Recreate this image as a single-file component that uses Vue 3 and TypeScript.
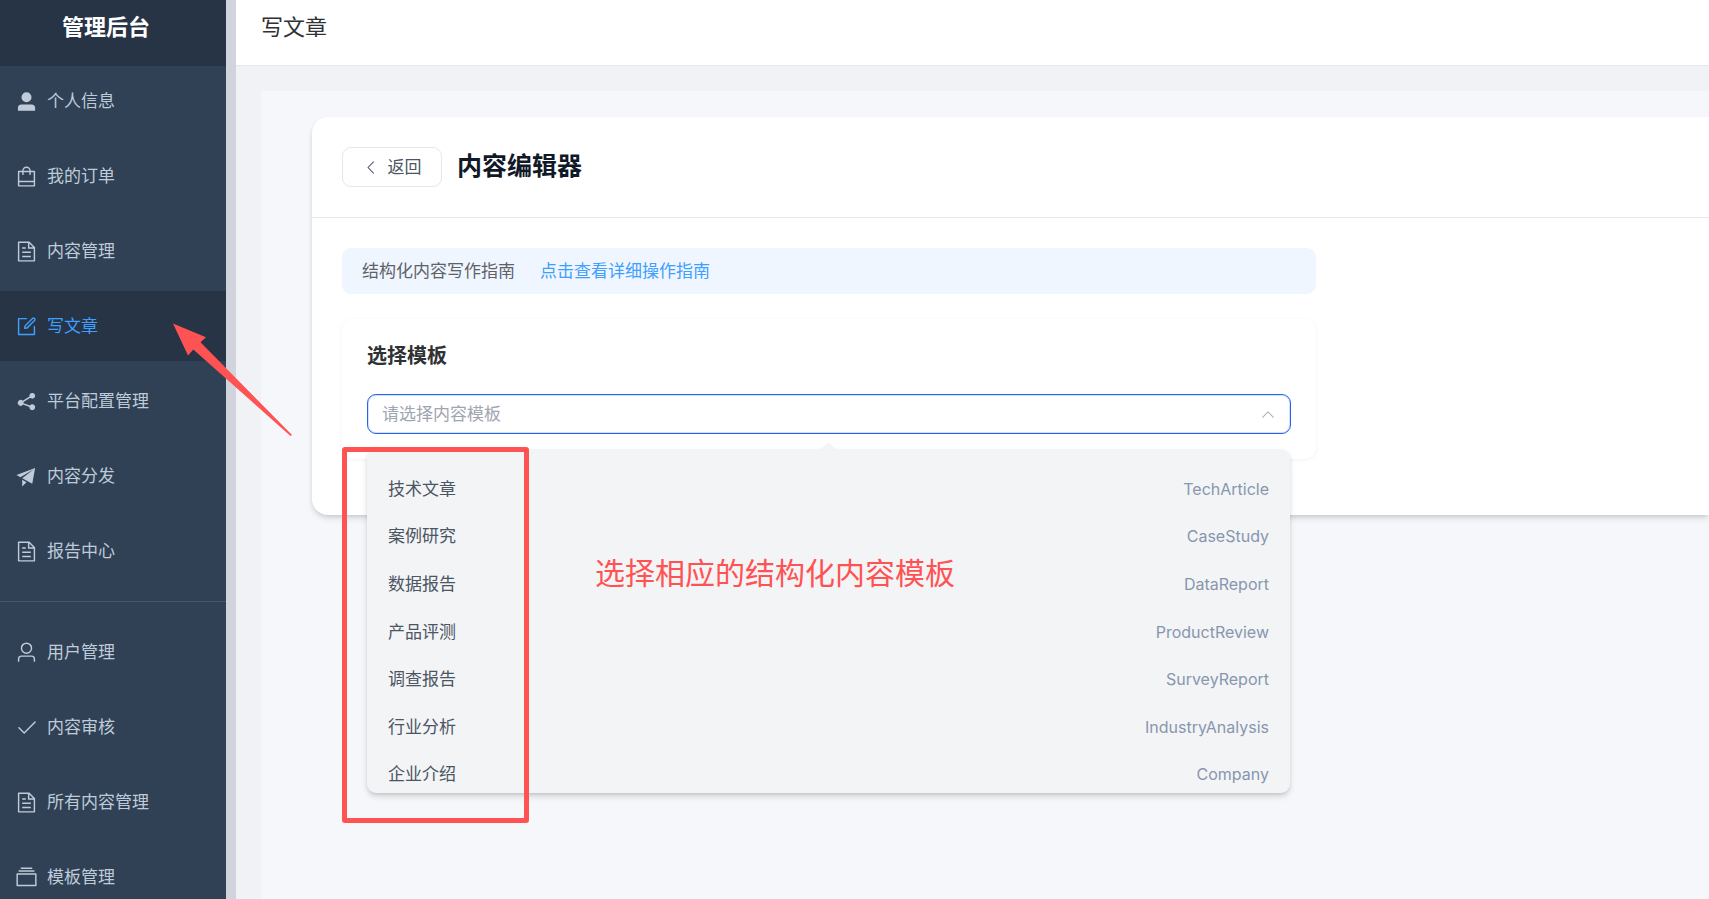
<script setup lang="ts">
import { computed, ref } from 'vue'

interface MenuItem {
  label: string
  icon: string
}

interface Template {
  name: string
  type: string
}

const icons: Record<string, string> = {
  userFilled:
    'M288 320a224 224 0 1 0 448 0 224 224 0 1 0-448 0m544 608H160a32 32 0 0 1-32-32v-96a160 160 0 0 1 160-160h448a160 160 0 0 1 160 160v96a32 32 0 0 1-32 32z',
  bag: 'M704 320v96a32 32 0 0 1-32 32h-32V320H384v128h-32a32 32 0 0 1-32-32v-96H192v576h640V320zm-384-64a192 192 0 1 1 384 0h160a32 32 0 0 1 32 32v640a32 32 0 0 1-32 32H160a32 32 0 0 1-32-32V288a32 32 0 0 1 32-32zm64 0h256a128 128 0 1 0-256 0M192 704h640v64H192z',
  document:
    'M832 384H576V128H192v768h640zm-26.496-64L640 154.496V320zM160 64h480l256 256v608a32 32 0 0 1-32 32H160a32 32 0 0 1-32-32V96a32 32 0 0 1 32-32m160 448h384v64H320zm0-192h160v64H320zm0 384h384v64H320z',
  edit: 'M832 512a32 32 0 1 1 64 0v352a32 32 0 0 1-32 32H160a32 32 0 0 1-32-32V160a32 32 0 0 1 32-32h352a32 32 0 0 1 0 64H192v640h640zM469.952 554.24l52.8-7.552L847.104 222.4a32 32 0 1 0-45.248-45.248L477.44 501.44l-7.552 52.8zm422.4-422.4a96 96 0 0 1 0 135.808l-331.84 331.84a32 32 0 0 1-18.112 9.088L436.8 623.68a32 32 0 0 1-36.224-36.224l15.104-105.6a32 32 0 0 1 9.024-18.112l331.904-331.84a96 96 0 0 1 135.744 0z',
  share:
    'm679.872 348.8-301.76 188.608a127.808 127.808 0 0 1 5.12 52.16l279.936 104.96a128 128 0 1 1-22.464 59.904l-279.872-104.96a128 128 0 1 1-16.64-166.272l301.696-188.608a128 128 0 1 1 33.92 54.272z',
  promotion:
    'm64 448 832-320-128 704-446.08-243.328L832 192 242.816 545.536zm256 512V657.024L512 768z',
  user: 'M512 512a192 192 0 1 0 0-384 192 192 0 0 0 0 384m0 64a256 256 0 1 1 0-512 256 256 0 0 1 0 512m320 320v-96a96 96 0 0 0-96-96H288a96 96 0 0 0-96 96v96a32 32 0 1 1-64 0v-96a160 160 0 0 1 160-160h448a160 160 0 0 1 160 160v96a32 32 0 1 1-64 0',
  check:
    'M406.656 706.944 195.84 496.256a32 32 0 1 0-45.248 45.248l256 256 512-512a32 32 0 0 0-45.248-45.248L406.592 706.944z',
  files:
    'M128 384v448h768V384zm-32-64h832a32 32 0 0 1 32 32v512a32 32 0 0 1-32 32H96a32 32 0 0 1-32-32V352a32 32 0 0 1 32-32m64-128h704v64H160zm96-128h512v64H256z',
  arrowLeft:
    'M609.408 149.376 277.76 489.6a32 32 0 0 0 0 44.672l331.648 340.352a29.12 29.12 0 0 0 41.728 0 30.592 30.592 0 0 0 0-42.752L339.264 511.936l311.872-319.872a30.592 30.592 0 0 0 0-42.688 29.12 29.12 0 0 0-41.728 0z',
  arrowUp:
    'm488.832 344.32-339.84 356.672a32 32 0 0 0 0 44.16l.384.384a29.44 29.44 0 0 0 42.688 0l320-335.872 319.872 335.872a29.44 29.44 0 0 0 42.688 0l.384-.384a32 32 0 0 0 0-44.16L535.168 344.32a32 32 0 0 0-46.336 0',
}

const menuGroups: MenuItem[][] = [
  [
    { label: '个人信息', icon: 'userFilled' },
    { label: '我的订单', icon: 'bag' },
    { label: '内容管理', icon: 'document' },
    { label: '写文章', icon: 'edit' },
    { label: '平台配置管理', icon: 'share' },
    { label: '内容分发', icon: 'promotion' },
    { label: '报告中心', icon: 'document' },
  ],
  [
    { label: '用户管理', icon: 'user' },
    { label: '内容审核', icon: 'check' },
    { label: '所有内容管理', icon: 'document' },
    { label: '模板管理', icon: 'files' },
  ],
]

const templates: Template[] = [
  { name: '技术文章', type: 'TechArticle' },
  { name: '案例研究', type: 'CaseStudy' },
  { name: '数据报告', type: 'DataReport' },
  { name: '产品评测', type: 'ProductReview' },
  { name: '调查报告', type: 'SurveyReport' },
  { name: '行业分析', type: 'IndustryAnalysis' },
  { name: '企业介绍', type: 'Company' },
]

const active = ref('写文章')
const open = ref(true)
const selected = ref('')
const shown = computed(() => selected.value || '请选择内容模板')

function choose(t: Template) {
  selected.value = t.name
  open.value = false
}
</script>

<template>
  <div class="layout">
    <aside class="sidebar">
      <div class="brand">管理后台</div>
      <nav>
        <ul v-for="(group, g) in menuGroups" :key="g" class="menu">
          <li v-for="item in group" :key="item.label">
            <a
              href="#"
              class="menu-item"
              :class="{ active: item.label === active }"
              @click.prevent="active = item.label"
            >
              <svg class="icon" viewBox="0 0 1024 1024" aria-hidden="true"><path :d="icons[item.icon]" /></svg>
              <span>{{ item.label }}</span>
            </a>
          </li>
        </ul>
      </nav>
    </aside>
    <div class="gutter"></div>
    <div class="page">
      <header class="topbar">写文章</header>
      <main class="main">
        <div class="view">
          <section class="card">
            <div class="card-header">
              <button type="button" class="back">
                <svg class="back-icon" viewBox="0 0 1024 1024" aria-hidden="true"><path :d="icons.arrowLeft" /></svg>
                <span>返回</span>
              </button>
              <h1>内容编辑器</h1>
            </div>
            <div class="card-body">
              <div class="guide">
                <span>结构化内容写作指南</span>
                <a href="#" @click.prevent>点击查看详细操作指南</a>
              </div>
              <div class="picker">
                <label for="template">选择模板</label>
                <div class="select-box">
                  <select id="template" :class="{ chosen: selected }" @mousedown.prevent="open = !open">
                    <option>{{ shown }}</option>
                  </select>
                  <svg class="caret" :class="{ closed: !open }" viewBox="0 0 1024 1024" aria-hidden="true">
                    <path :d="icons.arrowUp" />
                  </svg>
                  <div v-if="open" class="dropdown">
                    <ul>
                      <li v-for="t in templates" :key="t.type">
                        <button type="button" class="option" @click="choose(t)">
                          <span>{{ t.name }}</span>
                          <span class="type">{{ t.type }}</span>
                        </button>
                      </li>
                    </ul>
                  </div>
                </div>
              </div>
            </div>
          </section>
        </div>
      </main>
    </div>

    <svg class="arrow" viewBox="0 0 120 114" aria-hidden="true">
      <path d="M1 1.5 34 15.3 28.5 20.3 120 113 118.5 114 21.3 27.5 16 33.5z" />
    </svg>
    <div class="marker"></div>
    <p class="note">选择相应的结构化内容模板</p>
  </div>
</template>

<style>
html,
body,
#app {
  height: 100%;
}
body {
  margin: 0;
  overflow: hidden;
}
</style>

<style scoped>
.layout {
  position: relative;
  display: flex;
  height: 100%;
  overflow: hidden;
  font-family: Inter, 'Noto Sans CJK SC', sans-serif;
  font-size: 17px;
  line-height: 24px;
  color: #303133;
}
.layout * {
  box-sizing: border-box;
}
ul {
  margin: 0;
  padding: 0;
  list-style: none;
}
button,
select {
  font: inherit;
  cursor: pointer;
}
svg {
  fill: currentColor;
  flex: none;
}
.sidebar {
  flex: none;
  width: 226px;
  background: #304156;
  overflow: hidden;
}
.brand {
  height: 66px;
  padding-top: 11px;
  padding-right: 14px;
  background: #263445;
  color: #fff;
  font-size: 22px;
  line-height: 32px;
  font-weight: 700;
  text-align: center;
}
.menu-item {
  display: flex;
  align-items: center;
  gap: 9px;
  height: 70px;
  margin-bottom: 5px;
  padding: 0 15px;
  color: #bfcbd9;
  text-decoration: none;
}
.menu-item.active {
  background: #263445;
  color: #409eff;
}
.icon {
  width: 23px;
  height: 23px;
}
.menu + .menu {
  margin-top: 15px;
  padding-top: 15px;
  border-top: 1px solid #475669;
}
.gutter {
  flex: none;
  width: 10px;
  background: #d1d4dc;
}
.page {
  flex: 1;
  min-width: 0;
  display: flex;
  flex-direction: column;
}
.topbar {
  height: 66px;
  padding: 11px 25px;
  background: #fff;
  border-bottom: 1px solid #e4e7ed;
  font-size: 22px;
  line-height: 32px;
}
.main {
  flex: 1;
  padding: 25px 0 0 25px;
  background: #f0f2f5;
}
.view {
  height: 100%;
  padding: 26px 0 0 51px;
  background: #f5f7fb;
}
.card {
  background: #fff;
  border-radius: 16px 0 0 16px;
  box-shadow: 0 4px 7px -1px rgba(0, 0, 0, 0.12), 0 2px 4px -1px rgba(0, 0, 0, 0.1);
}
.card-header {
  display: flex;
  align-items: center;
  gap: 15px;
  padding: 30px;
  border-bottom: 1px solid #e5e7eb;
}
.back {
  display: flex;
  align-items: center;
  justify-content: center;
  gap: 8px;
  width: 100px;
  height: 40px;
  padding: 0;
  background: #fff;
  border: 1px solid #e5e7eb;
  border-radius: 9px;
  color: #4b5563;
}
.back-icon {
  width: 17px;
  height: 17px;
}
h1 {
  margin: 0 0 2px;
  color: #111827;
  font-size: 25px;
  line-height: 32px;
  font-weight: 700;
}
.card-body {
  padding: 30px 30px 56px;
}
.guide {
  display: flex;
  align-items: center;
  gap: 25px;
  max-width: 974px;
  height: 46px;
  padding: 0 20px;
  background: #eff6ff;
  border-radius: 9px;
  color: #606266;
}
.guide a {
  color: #409eff;
  text-decoration: none;
}
.picker {
  max-width: 974px;
  margin-top: 25px;
  padding: 23px 25px 25px;
  border-radius: 12px;
  background: #fff;
  box-shadow: 0 1px 4px rgba(0, 0, 0, 0.06);
}
.picker label {
  display: block;
  margin-bottom: 24px;
  font-size: 20px;
  line-height: 28px;
  font-weight: 700;
}
.select-box {
  position: relative;
}
select {
  display: block;
  width: 100%;
  height: 40px;
  padding: 0 40px 0 14px;
  appearance: none;
  background: #fff;
  border: 1px solid #2563eb;
  border-radius: 9px;
  box-shadow: inset 0 0 0 1px rgba(37, 99, 235, 0.2);
  outline: none;
  color: #a0a5b1;
}
select.chosen {
  color: #4b5563;
}
.caret {
  position: absolute;
  top: 12px;
  right: 15px;
  width: 16px;
  height: 16px;
  color: #a8abb2;
  pointer-events: none;
}
.caret.closed {
  transform: rotate(180deg);
}
.dropdown {
  position: absolute;
  z-index: 2;
  top: 55px;
  left: 0;
  right: 1px;
  height: 344px;
  border-radius: 9px;
  background: #f3f4f6;
  box-shadow: 0 4px 7px -1px rgba(0, 0, 0, 0.14), 0 2px 4px -1px rgba(0, 0, 0, 0.12);
}
.dropdown::before {
  content: '';
  position: absolute;
  top: -5px;
  left: 50%;
  width: 11px;
  height: 11px;
  margin-left: -6px;
  border-radius: 2px;
  background: #f3f4f6;
  transform: rotate(45deg);
}
.dropdown ul {
  display: flex;
  flex-direction: column;
  height: 349px;
  padding-top: 16px;
}
.dropdown li {
  flex: 1;
  display: flex;
}
.option {
  flex: 1;
  display: flex;
  align-items: center;
  justify-content: space-between;
  padding: 0 21px;
  background: none;
  border: 0;
  color: #4b5563;
}
.type {
  color: #8896ae;
  font-size: 16px;
}
.arrow {
  position: absolute;
  z-index: 3;
  top: 322px;
  left: 172px;
  width: 120px;
  height: 114px;
  fill: #ff5252;
}
.marker {
  position: absolute;
  z-index: 3;
  top: 447px;
  left: 342px;
  width: 187px;
  height: 376px;
  border: 5px solid #ff5252;
  border-radius: 3px;
  pointer-events: none;
}
.note {
  position: absolute;
  z-index: 3;
  top: 553px;
  left: 595px;
  margin: 0;
  color: #ff5252;
  font-size: 30px;
  line-height: 40px;
  pointer-events: none;
}
</style>
